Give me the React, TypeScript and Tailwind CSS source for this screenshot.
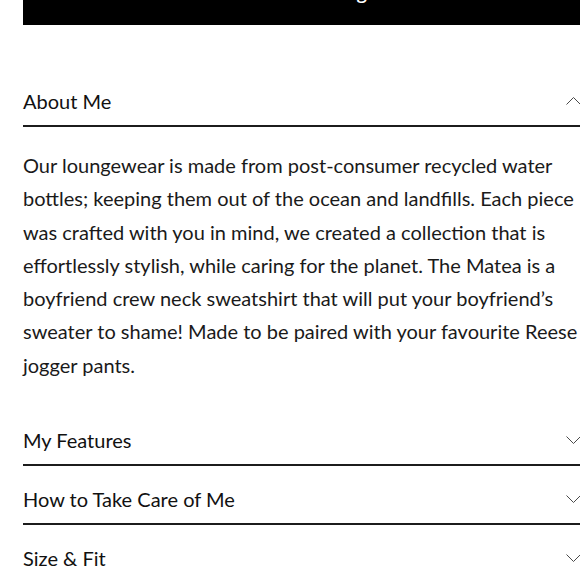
import React from "react";

const bodyLines = [
  "Our loungewear is made from post-consumer recycled water",
  "bottles; keeping them out of the ocean and landfills. Each piece",
  "was crafted with you in mind, we created a collection that is",
  "effortlessly stylish, while caring for the planet. The Matea is a",
  "boyfriend crew neck sweatshirt that will put your boyfriend\u2019s",
  "sweater to shame! Made to be paired with your favourite Reese",
  "jogger pants.",
];

function Chevron({ up }: { up?: boolean }) {
  return (
    <svg width="15" height="8" viewBox="0 0 15 8" fill="none" className="shrink-0">
      <path
        d={up ? "M0.5 7.5 L7.5 0.5 L14.5 7.5" : "M0.5 0.5 L7.5 7.5 L14.5 0.5"}
        stroke="#4a4a4a"
        strokeWidth="1"
      />
    </svg>
  );
}

function Header({ title, up, pad }: { title: string; up?: boolean; pad: string }) {
  return (
    <div className={`flex items-center justify-between border-b-2 border-[#1c1c1c] ${pad}`}>
      <span className="text-[20px] leading-[28px] text-[#111]">{title}</span>
      <Chevron up={up} />
    </div>
  );
}

export default function App() {
  return (
    <div
      className="w-[580px] h-[580px] overflow-hidden bg-white pl-[23px]"
      style={{ fontFamily: "Lato, 'Liberation Sans', sans-serif" }}
    >
      <div className="w-[558px]">
        <div className="-mt-[42px] flex h-[67px] items-center justify-center bg-black">
          <span className="ml-[16px] text-[20px] leading-[24px] font-semibold tracking-[0.1em] text-white">
            Add to Bag
          </span>
        </div>

        <Header title="About Me" up pad="pt-[62px] pb-[10px]" />
        <div className="pt-[22px] pb-[25px] text-[20px] leading-[33.3px] text-[#1a1a1a]">
          {bodyLines.map((l, i) => (
            <span key={i} className="block whitespace-nowrap">
              {l}
            </span>
          ))}
        </div>

        <Header title="My Features" pad="pt-[19px] pb-[10px]" />
        <Header title="How to Take Care of Me" pad="pt-[19px] pb-[10px]" />
        <Header title="Size & Fit" pad="pt-[19px] pb-[10px]" />
      </div>
    </div>
  );
}
